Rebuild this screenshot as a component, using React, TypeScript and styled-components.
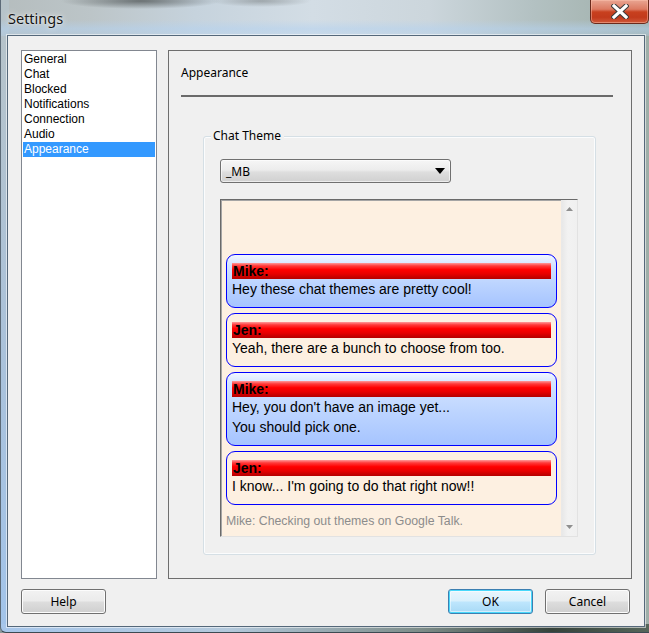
import React from "react";
import styled, { createGlobalStyle } from "styled-components";

const uiFont = `"Noto Sans", "Open Sans", sans-serif`;
const classicFont = `"Liberation Sans", Arial, sans-serif`;

const GlobalStyle = createGlobalStyle`
  html, body {
    margin: 0;
    padding: 0;
    background: #8c9a9c;
  }
  body {
    width: 649px;
    height: 633px;
    overflow: hidden;
  }
  #root {
    width: 649px;
    height: 633px;
  }
`;

/* ---------- window chrome ---------- */

const Window = styled.div`
  width: 649px;
  height: 633px;
  box-sizing: border-box;
  display: flex;
  flex-direction: column;
  border-left: 1px solid #5d6b78;
  border-bottom: 1px solid #3c4a52;
  border-radius: 0 0 0 6px;
  background:
    radial-gradient(ellipse 80px 8px at 140px 1px, rgba(70, 75, 75, 0.7), rgba(70, 75, 75, 0) 100%),
    radial-gradient(ellipse 50px 6px at 260px 1px, rgba(100, 105, 105, 0.45), rgba(100, 105, 105, 0) 100%),
    linear-gradient(90deg, #a7c6ea 0%, #b4c9dc 35%, #7d8c88 65%, #36423a 85%, #56665a 100%) left bottom / 100% 8px no-repeat,
    linear-gradient(180deg, rgba(255, 255, 255, 0) 55%, rgba(180, 210, 240, 0.55) 80%, rgba(180, 210, 240, 0.3) 100%) left top / 100% 36px no-repeat,
    linear-gradient(180deg, #b7c3c8 0%, #a9c2dc 60%, #a2c4ea 100%) left top / 8px 100% no-repeat,
    linear-gradient(90deg, #b5bdbe 0%, #bcc5c8 14%, #c6d3dd 30%, #d3dde5 48%, #ccd6dc 66%, #b3c1c2 82%, #9eaea8 100%);
`;

const TitleBar = styled.div`
  height: 35px;
  flex: none;
  display: flex;
  justify-content: space-between;
  align-items: flex-start;
  padding-left: 7px;
`;

const Title = styled.div`
  margin-top: 8px;
  font-family: ${uiFont};
  font-size: 14.5px;
  line-height: 20px;
  color: #141414;
  text-shadow: 0 0 6px rgba(255, 255, 255, 0.9), 0 0 2px rgba(255, 255, 255, 0.8);
`;

const CloseButton = styled.div`
  width: 59px;
  height: 24px;
  box-sizing: border-box;
  display: flex;
  align-items: center;
  justify-content: center;
  border: 1px solid #6b2a1c;
  border-top: none;
  border-radius: 0 0 5px 5px;
  background: linear-gradient(180deg, #e9a592 0%, #dc7a62 40%, #c8401f 52%, #c23a1c 75%, #d0593a 100%);
  box-shadow: inset 0 0 0 1px rgba(255, 200, 180, 0.45);
`;

const CloseGlyph = () => (
  <svg width="18" height="15" viewBox="0 0 18 15">
    <path d="M3 2 L15 13 M15 2 L3 13" stroke="#3a3a3a" strokeWidth="5.2" strokeLinecap="square" />
    <path d="M3 2 L15 13 M15 2 L3 13" stroke="#ffffff" strokeWidth="3.2" strokeLinecap="square" />
  </svg>
);

const Client = styled.div`
  flex: 1;
  margin: 0 4px 6px 6px;
  box-sizing: border-box;
  border: 1px solid #55687a;
  box-shadow: 0 0 0 1px rgba(255, 255, 255, 0.55);
  background: #f0f0f0;
  display: flex;
  flex-direction: column;
  padding: 14px 12px 12px 13px;
`;

/* ---------- main area ---------- */

const MainRow = styled.div`
  height: 529px;
  display: flex;
  gap: 11px;
`;

const CategoryList = styled.ul`
  width: 136px;
  box-sizing: border-box;
  margin: 0;
  padding: 1px;
  list-style: none;
  border: 1px solid #828790;
  background: #ffffff;
`;

const CategoryItem = styled.li<{ $selected?: boolean }>`
  height: 15px;
  line-height: 15px;
  padding-left: 1px;
  font-family: ${classicFont};
  font-size: 12px;
  color: ${(p) => (p.$selected ? "#ffffff" : "#000000")};
  background: ${(p) => (p.$selected ? "#3399ff" : "transparent")};
  white-space: nowrap;
`;

const Panel = styled.section`
  width: 464px;
  box-sizing: border-box;
  border: 1px solid #6e6e6e;
  background: #f0f0f0;
  padding: 0 18px 0 12px;
  display: flex;
  flex-direction: column;
`;

const PanelHeading = styled.div`
  margin-top: 14px;
  font-family: ${uiFont};
  font-size: 12px;
  line-height: 16px;
  color: #000;
`;

const HeadingRule = styled.div`
  margin-top: 14px;
  height: 2px;
  background: #6a6a6a;
`;

const GroupBox = styled.div`
  flex: 1;
  margin: 39px 17px 23px 22px;
  border: 1px solid #d5dfe5;
  border-radius: 3px;
  box-shadow: inset 0 0 0 1px #fbfcfd;
  padding: 0 17px 17px 16px;
  display: flex;
  flex-direction: column;
`;

const GroupCaption = styled.div`
  align-self: flex-start;
  margin: -9px 0 0 -9px;
  padding: 0 3px 0 2px;
  background: #f0f0f0;
  font-family: ${uiFont};
  font-size: 12px;
  line-height: 16px;
  color: #000;
`;

const Select = styled.div`
  margin-top: 15px;
  width: 231px;
  height: 24px;
  box-sizing: border-box;
  border: 1px solid #707070;
  border-radius: 3px;
  background: linear-gradient(180deg, #f6f6f6 0%, #ececec 45%, #dedede 55%, #d0d0d0 100%);
  box-shadow: inset 0 0 0 1px rgba(255, 255, 255, 0.6);
  display: flex;
  align-items: center;
  justify-content: space-between;
  padding: 0 5px 0 5px;
  font-family: ${uiFont};
  font-size: 12px;
  color: #000;
`;

const SelectArrow = () => (
  <svg width="10" height="6" viewBox="0 0 10 6">
    <path d="M0 0 H10 L5 6 Z" fill="#000" />
  </svg>
);

/* ---------- chat preview ---------- */

const Preview = styled.div`
  flex: 1;
  margin-top: 16px;
  display: flex;
  box-sizing: border-box;
  border-top: 1px solid #6a6a6a;
  border-left: 1px solid #6a6a6a;
  border-right: 1px solid #e2e2e2;
  border-bottom: 1px solid #e2e2e2;
  box-shadow: inset 1px 1px 0 #a5a5a5;
  background: #fdf0e1;
`;

const ChatArea = styled.div`
  flex: 1;
  display: flex;
  flex-direction: column;
  justify-content: flex-end;
  gap: 5px;
  padding: 0 4px 6px 5px;
`;

const Bubble = styled.div<{ $self?: boolean }>`
  border: 1px solid #0000ff;
  border-radius: 9px;
  padding: 8px 5px 8px 5px;
  background: ${(p) =>
    p.$self
      ? "linear-gradient(180deg, #f2f7ff 0px, #d4e4ff 10px, #bcd4ff 55%, #a6c4ff 100%)"
      : "#fdf0e1"};
`;

const NameBar = styled.div`
  height: 16px;
  line-height: 17px;
  padding-left: 1px;
  font-family: ${classicFont};
  font-size: 14px;
  font-weight: bold;
  color: #000;
  background: linear-gradient(180deg, #ff9a9a 0%, #ff3a3a 18%, #ff0000 42%, #e80000 68%, #b40000 100%);
  overflow: hidden;
`;

const MessageLine = styled.div`
  line-height: 20px;
  font-family: ${classicFont};
  font-size: 14px;
  color: #000;
  white-space: nowrap;
`;

const StatusLine = styled.div`
  margin-top: 2px;
  line-height: 18px;
  font-family: ${classicFont};
  font-size: 12.3px;
  color: #8c8c8c;
  white-space: nowrap;
`;

const ScrollTrack = styled.div`
  width: 16px;
  flex: none;
  box-sizing: border-box;
  border-left: 1px solid #e9e9e9;
  background: linear-gradient(90deg, #e8e8e8 0%, #f2f2f2 40%, #f0f0f0 100%);
  display: flex;
  flex-direction: column;
  justify-content: space-between;
  align-items: center;
  padding: 7px 0 7px;
`;

const ScrollArrow = ({ down }: { down?: boolean }) => (
  <svg width="7" height="4" viewBox="0 0 7 4">
    <path d={down ? "M0 0 H7 L3.5 4 Z" : "M0 4 H7 L3.5 0 Z"} fill="#8f8f8f" />
  </svg>
);

/* ---------- footer buttons ---------- */

const ButtonRow = styled.div`
  margin-top: 10px;
  margin-right: 2px;
  display: flex;
  align-items: center;
  gap: 12px;
`;

const Spacer = styled.div`
  flex: 1;
`;

const Button = styled.div<{ $default?: boolean }>`
  width: 85px;
  height: 25px;
  box-sizing: border-box;
  border: 1px solid ${(p) => (p.$default ? "#3c7fb1" : "#707070")};
  border-radius: 3px;
  display: flex;
  align-items: center;
  justify-content: center;
  font-family: ${uiFont};
  font-size: 12px;
  color: #000;
  background: ${(p) =>
    p.$default
      ? "linear-gradient(180deg, #eaf6fd 0%, #d9f0fc 48%, #bee6fd 52%, #a7d9f5 100%)"
      : "linear-gradient(180deg, #f2f2f2 0%, #ebebeb 48%, #dddddd 52%, #cfcfcf 100%)"};
  box-shadow: ${(p) =>
    p.$default ? "inset 0 0 0 1px #48d8fb, inset 0 0 0 2px rgba(255,255,255,0.5)" : "inset 0 0 0 1px #fcfcfc"};
`;

/* ---------- data ---------- */

const categories = ["General", "Chat", "Blocked", "Notifications", "Connection", "Audio", "Appearance"];

const messages: { name: string; lines: string[]; self: boolean }[] = [
  { name: "Mike:", lines: ["Hey these chat themes are pretty cool!"], self: true },
  { name: "Jen:", lines: ["Yeah, there are a bunch to choose from too."], self: false },
  { name: "Mike:", lines: ["Hey, you don't have an image yet...", "You should pick one."], self: true },
  { name: "Jen:", lines: ["I know... I'm going to do that right now!!"], self: false },
];

export default function App() {
  return (
    <>
      <GlobalStyle />
      <Window>
        <TitleBar>
          <Title>Settings</Title>
          <CloseButton>
            <CloseGlyph />
          </CloseButton>
        </TitleBar>
        <Client>
          <MainRow>
            <CategoryList>
              {categories.map((c) => (
                <CategoryItem key={c} $selected={c === "Appearance"}>
                  {c}
                </CategoryItem>
              ))}
            </CategoryList>
            <Panel>
              <PanelHeading>Appearance</PanelHeading>
              <HeadingRule />
              <GroupBox>
                <GroupCaption>Chat Theme</GroupCaption>
                <Select>
                  <span>_MB</span>
                  <SelectArrow />
                </Select>
                <Preview>
                  <ChatArea>
                    {messages.map((m, i) => (
                      <Bubble key={i} $self={m.self}>
                        <NameBar>{m.name}</NameBar>
                        {m.lines.map((l, j) => (
                          <MessageLine key={j}>{l}</MessageLine>
                        ))}
                      </Bubble>
                    ))}
                    <StatusLine>Mike: Checking out themes on Google Talk.</StatusLine>
                  </ChatArea>
                  <ScrollTrack>
                    <ScrollArrow />
                    <ScrollArrow down />
                  </ScrollTrack>
                </Preview>
              </GroupBox>
            </Panel>
          </MainRow>
          <ButtonRow>
            <Button>Help</Button>
            <Spacer />
            <Button $default>OK</Button>
            <Button>Cancel</Button>
          </ButtonRow>
        </Client>
      </Window>
    </>
  );
}
